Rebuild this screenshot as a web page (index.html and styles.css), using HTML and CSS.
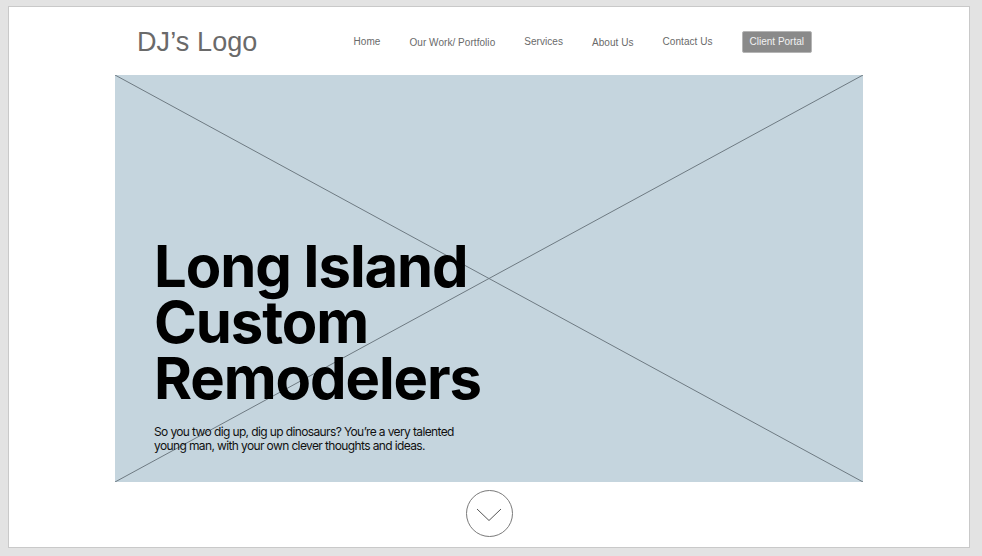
FILE: index.html
```html
<!DOCTYPE html>
<html lang="en">
<head>
<meta charset="utf-8">
<title>Long Island Custom Remodelers</title>
<link rel="stylesheet" href="styles.css">
</head>
<body>
<div class="artboard">
  <header class="header">
    <div class="logo">DJ’s Logo</div>
    <nav class="nav">
      <a class="nav-link" href="#">Home</a>
      <a class="nav-link nav-low" href="#">Our Work/ Portfolio</a>
      <a class="nav-link" href="#">Services</a>
      <a class="nav-link nav-low" href="#">About Us</a>
      <a class="nav-link" href="#">Contact Us</a>
      <a class="nav-btn" href="#">Client Portal</a>
    </nav>
  </header>
  <section class="hero">
    <svg class="hero-x" viewBox="0 0 100 100" preserveAspectRatio="none" aria-hidden="true">
      <line x1="0" y1="0" x2="100" y2="100" vector-effect="non-scaling-stroke"/>
      <line x1="100" y1="0" x2="0" y2="100" vector-effect="non-scaling-stroke"/>
    </svg>
    <div class="hero-content">
      <h1 class="hero-title">Long Island<br>Custom<br>Remodelers</h1>
      <p class="hero-text">So you two dig up, dig up dinosaurs? You’re a very talented<br>young man, with your own clever thoughts and ideas.</p>
    </div>
  </section>
  <div class="scroll-wrap">
    <button class="scroll-btn" aria-label="Scroll down">
      <svg width="26" height="14" viewBox="0 0 26 14"><polyline points="1,1 13,12.5 25,1"/></svg>
    </button>
  </div>
</div>
</body>
</html>
```

FILE: styles.css
```css
* { box-sizing: border-box; }
html, body { margin: 0; padding: 0; }
body {
  background: #e3e3e3;
  width: 982px;
  height: 556px;
  overflow: hidden;
  font-family: "Liberation Sans", Arial, sans-serif;
}
.artboard {
  margin: 6px 0 0 8px;
  width: 962px;
  height: 542px;
  background: #fff;
  border: 1px solid #c9c9c9;
}
.header {
  width: 748px;
  height: 68px;
  margin: 0 auto;
  padding: 0 51px 0 22px;
  display: flex;
  align-items: center;
  justify-content: space-between;
}
.logo {
  font-size: 27px;
  color: #6a6a6a;
  margin-top: 2px;
  letter-spacing: 0.1px;
}
.nav {
  display: flex;
  align-items: center;
  gap: 29px;
}
.nav-link {
  font-size: 10px;
  color: #6a6a6a;
  text-decoration: none;
  letter-spacing: 0.05px;
}
.nav-low { position: relative; top: 1px; }
.nav-btn {
  font-size: 10px;
  color: #f2f2f2;
  background: #8a8a8a;
  text-decoration: none;
  height: 22px;
  line-height: 20px;
  padding: 0 7px;
  border-radius: 2px;
  border: 1px solid #b5b5b5;
  margin-top: 1px;
}
.hero {
  position: relative;
  width: 748px;
  height: 407px;
  margin: 0 auto;
  background: #c5d5de;
}
.hero-x {
  position: absolute;
  inset: 0;
  width: 100%;
  height: 100%;
}
.hero-x line {
  stroke: #6e7a82;
  stroke-width: 1;
}
.hero-content {
  position: relative;
  padding: 163px 0 0 39px;
}
.hero-title {
  margin: 0;
  font-family: Inter, "Liberation Sans", sans-serif;
  font-weight: 700;
  font-size: 58px;
  line-height: 56px;
  letter-spacing: -1.1px;
  color: #000;
}
.hero-text {
  margin: 19px 0 0 0;
  font-family: Inter, "Liberation Sans", sans-serif;
  font-size: 12px;
  line-height: 14px;
  letter-spacing: -0.62px;
  color: #111;
}
.scroll-wrap {
  display: flex;
  justify-content: center;
  padding-top: 8px;
}
.scroll-btn {
  width: 47px;
  height: 47px;
  border-radius: 50%;
  border: 1px solid #7a7a7a;
  background: #fff;
  padding: 0;
  display: flex;
  align-items: center;
  justify-content: center;
}
.scroll-btn svg { margin-top: 3px; }
.scroll-btn polyline {
  fill: none;
  stroke: #555;
  stroke-width: 1;
}
```
